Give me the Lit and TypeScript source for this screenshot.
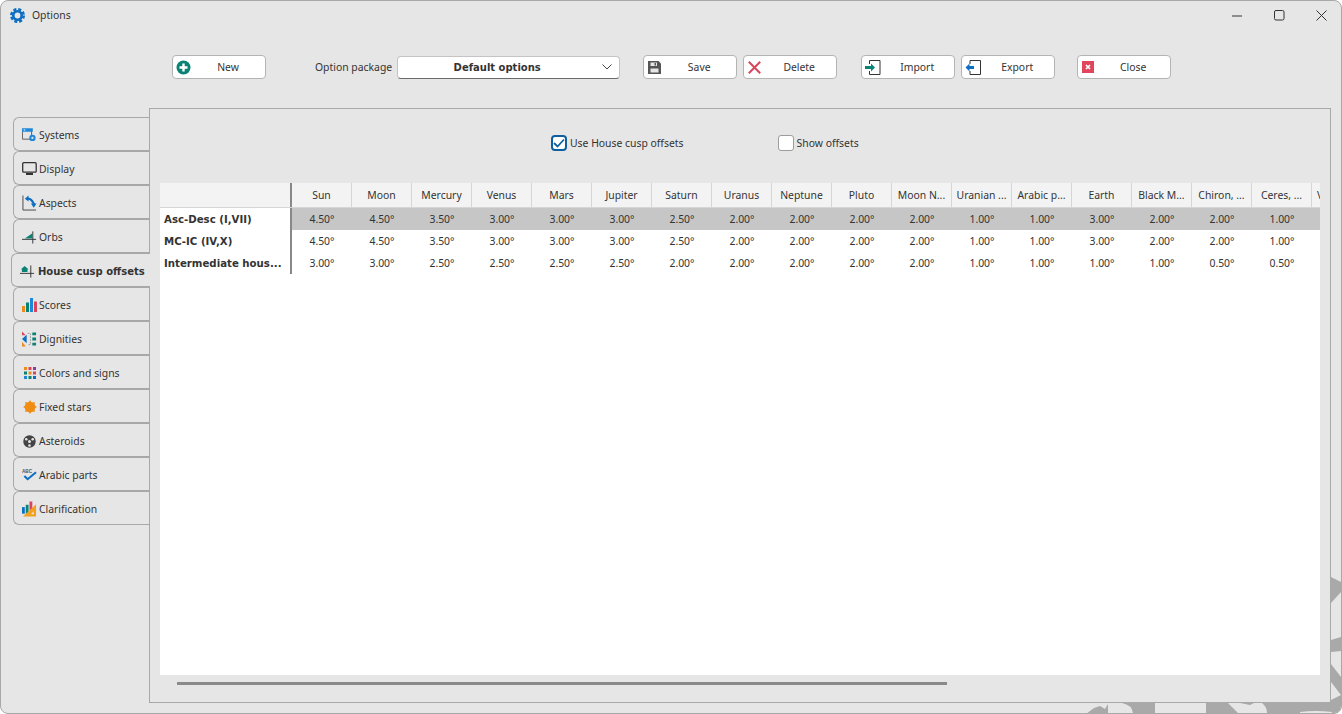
import { LitElement, html, css, svg } from "lit";
import { customElement } from "lit/decorators.js";

const bodies = ["Sun", "Moon", "Mercury", "Venus", "Mars", "Jupiter", "Saturn", "Uranus", "Neptune", "Pluto", "Moon N...", "Uranian ...", "Arabic p...", "Earth", "Black M...", "Chiron, ...", "Ceres, ..."];

const rows = [
    { name: "Asc-Desc (I,VII)", sel: true, v: [4.5, 4.5, 3.5, 3, 3, 3, 2.5, 2, 2, 2, 2, 1, 1, 3, 2, 2, 1] },
    { name: "MC-IC (IV,X)", sel: false, v: [4.5, 4.5, 3.5, 3, 3, 3, 2.5, 2, 2, 2, 2, 1, 1, 3, 2, 2, 1] },
    { name: "Intermediate hous...", sel: false, v: [3, 3, 2.5, 2.5, 2.5, 2.5, 2, 2, 2, 2, 2, 1, 1, 1, 1, 0.5, 0.5] },
];

const icons: Record<string, unknown> = {
    gear: svg`<svg width="15" height="15" viewBox="0 0 15 15"><circle cx="7.5" cy="7.5" r="6.2" fill="none" stroke="#0c6fc4" stroke-width="2.6" stroke-dasharray="3 1.87"/><circle cx="7.5" cy="7.5" r="4.2" fill="none" stroke="#0c6fc4" stroke-width="2.6"/></svg>`,
    plus: svg`<svg width="15" height="15" viewBox="0 0 15 15"><circle cx="7.5" cy="7.5" r="7" fill="#0b8374"/><path d="M7.500 3.500v8M3.500 7.500h8" stroke="#fff" stroke-width="2.400"/></svg>`,
    save: svg`<svg width="13" height="13" viewBox="0 0 13 13"><path fill="#555" d="M0 0h10.500L13 2.500V13H0z"/><path fill="#e6e6e6" d="M2.500 1.500h6.500v3.500H2.500zM2.500 7.500h8V11.500h-8z"/><path fill="#555" d="M6.500 2h1.500v2.500H6.500z"/></svg>`,
    del: svg`<svg width="13" height="13" viewBox="0 0 13 13"><path d="M.8.800l11.400 11.400M12.200.800L.8 12.200" stroke="#d9455c" stroke-width="2"/></svg>`,
    imp: svg`<svg width="16" height="15" viewBox="0 0 16 15"><path d="M4.500 4V.5h10.500v14H4.500V11" fill="none" stroke="#333"/><path fill="#0b8374" d="M0 6h6V3.500L10 7.500l-4 4V9H0z"/></svg>`,
    exp: svg`<svg width="16" height="15" viewBox="0 0 16 15"><path d="M5 4V.5h10.500v14H5V11" fill="none" stroke="#333"/><path fill="#0c6fc4" d="M9 6H4.500V3.500L.5 7.500l4 4V9H9z"/></svg>`,
    close: svg`<svg width="12" height="12" viewBox="0 0 12 12"><rect width="12" height="12" fill="#e0455e"/><path d="M4 4l4 4M8 4l-4 4" stroke="#fff" stroke-width="1.700"/></svg>`,
    systems: svg`<svg width="18" height="16" viewBox="0 0 18 16"><path d="M.5 2h11v11H.5z" fill="none" stroke="#444"/><path fill="#1f87d8" d="M0 0h13v4H0z"/><path fill="#fff" d="M2 1.500h2v1H2z"/><circle cx="12.500" cy="11.500" r="3.800" fill="#1f87d8"/><circle cx="12.500" cy="11.500" r="1.300" fill="#e6e6e6"/></svg>`,
    display: svg`<svg width="15" height="14" viewBox="0 0 15 14"><rect x=".7" y=".7" width="13.500" height="9.500" rx="1" fill="none" stroke="#333" stroke-width="1.300"/><path fill="#333" d="M4 11h7v2H4z"/></svg>`,
    aspects: svg`<svg width="16" height="16" viewBox="0 0 16 16"><path d="M1 0v15.500h14" fill="none" stroke="#444"/><path d="M5.500 3.500c3-1 5 1 7.500 6" fill="none" stroke="#0c6fc4" stroke-width="2.200"/><path fill="#0c6fc4" d="M7 0v6.500L3 3.500zM9.500 8.500H15.500L12.500 13z"/></svg>`,
    orbs: svg`<svg width="16" height="14" viewBox="0 0 16 14"><path d="M0 9.500h15M11.500 1v13" stroke="#333" fill="none"/><path fill="#0b8374" d="M3 8.500L11 3v5.500z"/></svg>`,
    house: svg`<svg width="16" height="15" viewBox="0 0 16 15"><path d="M0 9.500h15M11.500 1v13" stroke="#333" fill="none"/><path fill="#0b8374" d="M5 1.500L9 5H8v3H2V5H1z"/></svg>`,
    scores: svg`<svg width="15" height="14" viewBox="0 0 15 14"><path fill="#ef8a1e" d="M0 8h3v6H0z"/><path fill="#0b8374" d="M4 4.500h3V14H4z"/><path fill="#1f87d8" d="M8 0h3v14H8z"/><path fill="#d9455c" d="M12 3.500h3V14h-3z"/></svg>`,
    dignities: svg`<svg width="16" height="16" viewBox="0 0 16 16"><path fill="#d9455c" d="M0 0l4 4H0z"/><path fill="#ef8a1e" d="M0 16V11l4 5z"/><path fill="#0c6fc4" d="M0 8l5-4.500v9z"/><path d="M6 2h3v12H6" fill="none" stroke="#999" stroke-dasharray="2 1"/><path fill="#0b8374" d="M11 1h4v3h-4zM11 6.500h4v3h-4zM11 12h4v3h-4z"/></svg>`,
    colors: svg`<svg width="12" height="12" viewBox="0 0 12 12"><path fill="#ef8a1e" d="M0 0h3v3H0z"/><path fill="#d9455c" d="M4.500 0h3v3h-3z"/><path fill="#8d3aa8" d="M9 0h3v3H9z"/><path fill="#0b8374" d="M0 4.500h3v3H0z"/><path fill="#ef8a1e" d="M4.500 4.500h3v3h-3z"/><path fill="#d9455c" d="M9 4.500h3v3H9z"/><path fill="#1f87d8" d="M0 9h3v3H0z"/><path fill="#0b8374" d="M4.500 9h3v3h-3z"/><path fill="#0c6fc4" d="M9 9h3v3H9z"/></svg>`,
    star: svg`<svg width="14" height="14" viewBox="0 0 14 14"><circle cx="7" cy="7" r="5.300" fill="#f08c12"/><path fill="#f08c12" d="M7 0l1.500 2.500h-3zM7 14l1.500-2.500h-3zM0 7l2.500 1.500v-3zM14 7l-2.500 1.500v-3zM2 2l3 .8L2.800 5zM12 2l-3 .8L11.200 5zM2 12l3-.8L2.800 9zM12 12l-3-.8L11.200 9z"/></svg>`,
    asteroid: svg`<svg width="13" height="13" viewBox="0 0 13 13"><circle cx="6.500" cy="6.500" r="6.200" fill="#444"/><circle cx="6.500" cy="6.500" r="1.500" fill="#e6e6e6"/><circle cx="3.300" cy="4.300" r="1.300" fill="#e6e6e6"/><circle cx="9.700" cy="4.300" r="1.300" fill="#e6e6e6"/><circle cx="6.500" cy="10.500" r="1.300" fill="#e6e6e6"/></svg>`,
    arabic: svg`<svg width="16" height="14" viewBox="0 0 16 14"><text x="0" y="4.500" font-family="Liberation Sans" font-size="5" font-weight="700" fill="#555">ABC</text><path d="M2.500 8l3.500 3.500L15 4" fill="none" stroke="#0c6fc4" stroke-width="2.200"/></svg>`,
    clar: svg`<svg width="16" height="16" viewBox="0 0 16 16"><path fill="#0c6fc4" d="M0 6h3v7H0z"/><path fill="#0b8374" d="M4 3.500h3V13H4z"/><path fill="#d9455c" d="M8 0h3v9H8z"/><path fill="#f2a11e" d="M1 16L15 3v13z"/><path fill="#e6e6e6" d="M9.500 13.500l3-3v3z"/></svg>`,
};

const tabs = [
    ["systems", "Systems"], ["display", "Display"], ["aspects", "Aspects"], ["orbs", "Orbs"],
    ["house", "House cusp offsets"], ["scores", "Scores"], ["dignities", "Dignities"], ["colors", "Colors and signs"],
    ["star", "Fixed stars"], ["asteroid", "Asteroids"], ["arabic", "Arabic parts"], ["clar", "Clarification"],
];

@customElement("app-root")
export class AppRoot extends LitElement {
    static styles = css`
        :host {
            display: block;
            width: 1342px;
            height: 714px;
            overflow: hidden;
            font-family: "Noto Sans", "Open Sans", sans-serif;
            font-size: 10.4px;
            color: #333;
        }
        .window {
            box-sizing: border-box;
            position: relative;
            width: 1342px;
            height: 714px;
            background: #e6e6e6;
            border: 1px solid #a8a8a8;
            border-radius: 8px;
            overflow: hidden;
            display: flex;
            flex-direction: column;
        }
        .deco {
            position: absolute;
            left: -1px;
            top: -1px;
        }
        .title {
            position: relative;
            display: flex;
            align-items: center;
            height: 28px;
            padding-left: 9px;
            gap: 7px;
            flex: none;
        }
        .title svg {
            display: block;
        }
        .winbtns {
            margin-left: auto;
            margin-right: -1px;
            display: flex;
        }
        .winbtns span {
            width: 42px;
            height: 28px;
            display: flex;
            align-items: center;
            justify-content: center;
        }
        .toolbar {
            position: relative;
            display: flex;
            align-items: center;
            height: 24px;
            margin-top: 26px;
            padding-left: 171px;
            flex: none;
        }
        .btn {
            box-sizing: border-box;
            width: 94px;
            height: 24px;
            background: #fff;
            border: 1px solid #b4b4b4;
            border-radius: 4px;
            display: flex;
            align-items: center;
            position: relative;
            justify-content: center;
            padding: 0 0 1px 18px;
        }
        .btn svg {
            position: absolute;
            left: 3px;
            top: 4px;
        }
        .btn.x svg {
            left: 4px;
            top: 5px;
        }
        .gap6 {
            margin-left: 6px;
        }
        .gap24 {
            margin-left: 24px;
        }
        .gap22 {
            margin-left: 22px;
        }
        .pkg {
            margin-left: 49px;
            margin-right: 5px;
            padding-bottom: 1px;
        }
        .combo {
            box-sizing: border-box;
            width: 223px;
            height: 23px;
            margin-right: 23px;
            background: #fff;
            border: 1px solid #c4c4c4;
            border-bottom: 1px solid #6a6a6a;
            border-radius: 4px;
            display: flex;
            align-items: center;
            justify-content: center;
            font-weight: 700;
            font-family: "DejaVu Sans", sans-serif;
            font-size: 10px;
            position: relative;
            padding-right: 23px;
        }
        .combo svg {
            position: absolute;
            right: 7px;
            top: 7px;
        }
        .main {
            position: relative;
            flex: 1;
            display: flex;
            margin-top: 29px;
            margin-bottom: 10px;
            margin-right: 10px;
            min-height: 0;
            min-width: 0;
        }
        .tabs {
            flex: none;
            width: 148px;
            padding-top: 9px;
            display: flex;
            flex-direction: column;
            align-items: flex-end;
        }
        .tab {
            box-sizing: border-box;
            width: 137px;
            height: 34px;
            margin-right: -1px;
            background: #e6e6e6;
            border: 1px solid #a8a8a8;
            border-right: none;
            border-radius: 6px 0 0 6px;
            display: flex;
            align-items: center;
            padding: 2px 0 0 8px;
            gap: 2px;
            position: relative;
            white-space: nowrap;
        }
        .tab .ic {
            width: 15px;
            display: flex;
            justify-content: center;
            flex: none;
        }
        .tab.on {
            width: 139px;
            z-index: 2;
            gap: 3px;
            padding-top: 3px;
            font-family: "DejaVu Sans", sans-serif;
            font-size: 10px;
            font-weight: 700;
        }
        .panel {
            box-sizing: border-box;
            flex: 1;
            min-width: 0;
            position: relative;
            z-index: 1;
            border: 1px solid #a8a8a8;
            background: #e6e6e6;
            display: flex;
            flex-direction: column;
            padding: 0 10px;
        }
        .checks {
            display: flex;
            align-items: center;
            height: 68px;
            margin-bottom: 6px;
            padding-left: 391px;
            flex: none;
        }
        .check {
            display: flex;
            align-items: center;
            gap: 3px;
        }
        .check.b {
            margin-left: 94px;
        }
        .box {
            box-sizing: border-box;
            width: 16px;
            height: 16px;
            background: #fff;
            border: 1px solid #9c9c9c;
            border-radius: 3px;
        }
        .box.on {
            border: 2px solid #0f5fa0;
            border-radius: 4px;
            display: flex;
            align-items: center;
            justify-content: center;
        }
        .grid {
            flex: 1;
            background: #fff;
            overflow: hidden;
            min-height: 0;
        }
        .row {
            display: flex;
            height: 22px;
            align-items: center;
            white-space: nowrap;
        }
        .row.head {
            height: 25px;
            background: #f3f3f3;
            border-bottom: 1px solid #d6d6d6;
            box-sizing: border-box;
        }
        .row.sel .cell,
        .row.sel .fill {
            background: #c6c6c6;
        }
        .rh {
            box-sizing: border-box;
            width: 132px;
            height: 100%;
            flex: none;
            border-right: 2px solid #888;
            padding-left: 4px;
            font-family: "DejaVu Sans", sans-serif;
            font-size: 10.2px;
            font-weight: 700;
            display: flex;
            align-items: center;
        }
        .cell {
            flex: none;
            width: 60px;
            height: 100%;
            display: flex;
            align-items: center;
            justify-content: center;
            box-sizing: border-box;
        }
        .fill {
            flex: 1;
            height: 100%;
        }
        .head .cell {
            border-right: 1px solid #d6d6d6;
        }
        .head .cut {
            flex: 1;
            padding-left: 5px;
            height: 100%;
            display: flex;
            align-items: center;
            box-sizing: border-box;
            overflow: hidden;
        }
        .scroll {
            height: 27px;
            flex: none;
            padding: 7px 0 0 17px;
            box-sizing: border-box;
        }
        .thumb {
            width: 770px;
            height: 3px;
            background: #8a8a8a;
        }
    `;

    btn(icon: string, label: string, cls = "") {
        return html`<div class="btn ${cls}">${icons[icon]}${label}</div>`;
    }

    render() {
        return html`<div class="window">
            <svg class="deco" width="1342" height="714" viewBox="0 0 1342 714">
                <path fill="#a9a9a9" d="M1331 577l10 5v132h-255l8-6 6-2 5 3 3-5 6-1h2z" />
                <g fill="#e6e6e6">
                    <path d="M1341 592v45l-10 3v-37zM1331 652l10-1v26l-10-13zM1331 682l10 13-10 5zM1155 703h51v10h-51zM1228 703h12l10 2 4-2h8q5 4 5 10h-29zM1108 703h14q10 2 11 10h-25zM1300 712q15-2 32 0v2h-32z" />
                </g>
            </svg>
            <div class="title">
                ${icons.gear}<span>Options</span>
                <div class="winbtns">
                    <span><svg width="11" height="11"><path d="M0 6h10" stroke="#333"/></svg></span>
                    <span><svg width="11" height="11"><rect x=".5" y=".5" width="9.500" height="9.500" rx="1.500" fill="none" stroke="#333"/></svg></span>
                    <span><svg width="11" height="11"><path d="M.5.500l10 10M10.500.500l-10 10" stroke="#333"/></svg></span>
                </div>
            </div>
            <div class="toolbar">
                ${this.btn("plus", "New")}
                <span class="pkg">Option package</span>
                <div class="combo">Default options
                    <svg width="10" height="6"><path d="M.5.500l4.500 4.500 4.500-4.500" fill="none" stroke="#444"/></svg>
                </div>
                ${this.btn("save", "Save", "x")}
                ${this.btn("del", "Delete", "x gap6")}
                ${this.btn("imp", "Import", "gap24")}
                ${this.btn("exp", "Export", "gap6")}
                ${this.btn("close", "Close", "x gap22")}
            </div>
            <div class="main">
                <div class="tabs">
                    ${tabs.map(([ic, label]) => html`<div class="tab ${label === "House cusp offsets" ? "on" : ""}">
                        <span class="ic">${icons[ic]}</span><span>${label}</span>
                    </div>`)}
                </div>
                <div class="panel">
                    <div class="checks">
                        <div class="check">
                            <span class="box on"><svg width="12" height="10"><path d="M1 5l3.500 3.500L11 1.500" fill="none" stroke="#0f5fa0" stroke-width="1.800"/></svg></span>
                            Use House cusp offsets
                        </div>
                        <div class="check b"><span class="box"></span>Show offsets</div>
                    </div>
                    <div class="grid">
                        <div class="row head">
                            <div class="rh"></div>
                            ${bodies.map((b) => html`<div class="cell">${b}</div>`)}
                            <div class="cut">V</div>
                        </div>
                        ${rows.map((r) => html`<div class="row ${r.sel ? "sel" : ""}">
                            <div class="rh">${r.name}</div>
                            ${r.v.map((v) => html`<div class="cell">${v.toFixed(2)}°</div>`)}
                            <div class="fill"></div>
                        </div>`)}
                    </div>
                    <div class="scroll"><div class="thumb"></div></div>
                </div>
            </div>
        </div>`;
    }
}
